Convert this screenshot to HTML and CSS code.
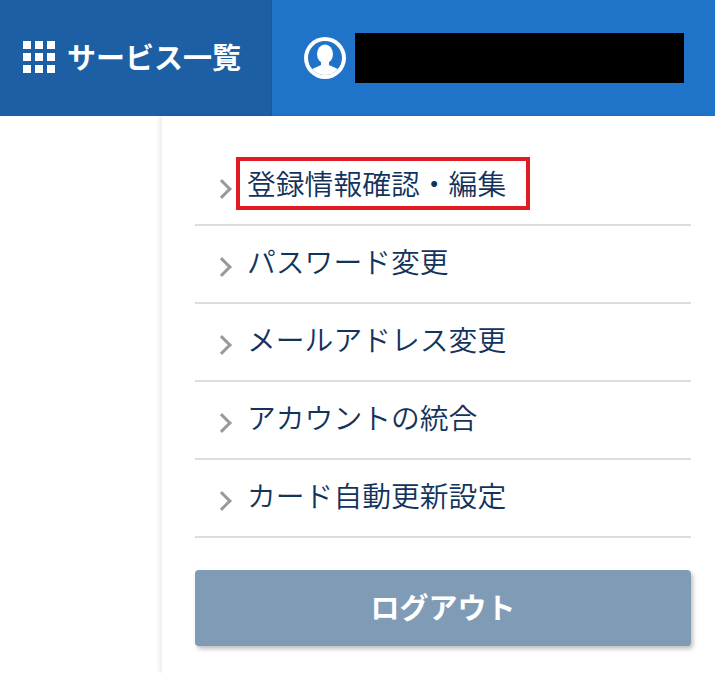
FILE: index.html
```html
<!DOCTYPE html>
<html lang="ja">
<head>
    <meta charset="UTF-8">
    <title>アカウントメニュー</title>
    <link rel="stylesheet" href="styles.css">
</head>
<body>
    <header class="topbar">
        <div class="service-tab">
            <svg class="grid-icon" width="32" height="32" viewBox="0 0 32 32" fill="#fff">
                <rect x="0" y="0" width="8" height="8"/><rect x="12" y="0" width="8" height="8"/><rect x="24" y="0" width="8" height="8"/>
                <rect x="0" y="12" width="8" height="8"/><rect x="12" y="12" width="8" height="8"/><rect x="24" y="12" width="8" height="8"/>
                <rect x="0" y="24" width="8" height="8"/><rect x="12" y="24" width="8" height="8"/><rect x="24" y="24" width="8" height="8"/>
            </svg>
            <span class="service-label">サービス一覧</span>
        </div>
        <div class="user-area">
            <svg class="user-icon" width="42" height="42" viewBox="0 0 42 42">
                <circle cx="21" cy="21" r="21" fill="#fff"/>
                <circle cx="21" cy="21" r="17" fill="#1f74c9"/>
                <clipPath id="user-clip"><circle cx="21" cy="21" r="17"/></clipPath>
                <g clip-path="url(#user-clip)" fill="#fff">
                    <ellipse cx="21" cy="17" rx="8" ry="9.5"/>
                    <path d="M17 24h8v4l11 5v9H6v-9l11-5z"/>
                </g>
            </svg>
            <div class="masked-name"></div>
        </div>
    </header>
    <div class="layout">
        <nav class="panel">
            <ul class="menu">
                <li class="menu-item"><span class="chevron"></span><span class="menu-label highlighted">登録情報確認・編集</span></li>
                <li class="menu-item"><span class="chevron"></span><span class="menu-label">パスワード変更</span></li>
                <li class="menu-item"><span class="chevron"></span><span class="menu-label">メールアドレス変更</span></li>
                <li class="menu-item"><span class="chevron"></span><span class="menu-label">アカウントの統合</span></li>
                <li class="menu-item"><span class="chevron"></span><span class="menu-label">カード自動更新設定</span></li>
            </ul>
            <button class="logout-btn">ログアウト</button>
        </nav>
    </div>
</body>
</html>
```

FILE: styles.css
```css
html, body {
    margin: 0;
    padding: 0;
    height: 673px;
    overflow: hidden;
    background-color: #fff;
    font-family: "Noto Sans CJK JP", "Liberation Sans", sans-serif;
}

.topbar {
    display: flex;
    height: 116px;
    background-color: #1f74c9;
}

.service-tab {
    display: flex;
    align-items: center;
    gap: 12px;
    width: 272px;
    padding-left: 23px;
    box-sizing: border-box;
    background-color: #1c5fa5;
    border-right: 1px solid #1a5898;
}

.grid-icon {
    margin-bottom: 2px;
}

.service-label {
    margin-bottom: 5px;
    color: #fff;
    font-size: 29px;
    font-weight: 700;
}

.user-area {
    display: flex;
    align-items: center;
    gap: 9px;
    padding-left: 32px;
}

.masked-name {
    width: 329px;
    height: 50px;
    background-color: #000;
}

.layout {
    display: flex;
    height: 557px;
    padding-left: 162px;
}

.panel {
    flex: 1;
    padding: 32px 24px 0 33px;
    box-shadow: -3px 0 4px rgba(0, 0, 0, 0.07);
}

.menu {
    list-style: none;
    margin: 0;
    padding: 0;
}

.menu-item {
    display: flex;
    align-items: center;
    gap: 18px;
    height: 76px;
    padding-left: 23px;
    border-bottom: 2px solid #dcdcdc;
}

.chevron {
    width: 11px;
    height: 11px;
    margin-top: 6px;
    border-top: 3px solid #999;
    border-right: 3px solid #999;
    transform: rotate(45deg);
    flex-shrink: 0;
    margin-left: -3px;
}

.menu-label {
    position: relative;
    margin-bottom: 6px;
    color: #12335c;
    font-size: 28.8px;
    font-weight: 350;
    line-height: 40px;
}

.highlighted::after {
    content: "";
    position: absolute;
    left: -11px;
    right: -24px;
    top: -6px;
    bottom: -7px;
    border: 4px solid #e01b24;
}

.logout-btn {
    display: block;
    width: 100%;
    height: 76px;
    margin-top: 32px;
    padding: 0 0 5px;
    border: none;
    border-radius: 4px;
    background-color: #7f9bb6;
    color: #fff;
    font-family: inherit;
    font-size: 29px;
    font-weight: 700;
    box-shadow: 2px 3px 4px rgba(0, 0, 0, 0.25);
}
```
